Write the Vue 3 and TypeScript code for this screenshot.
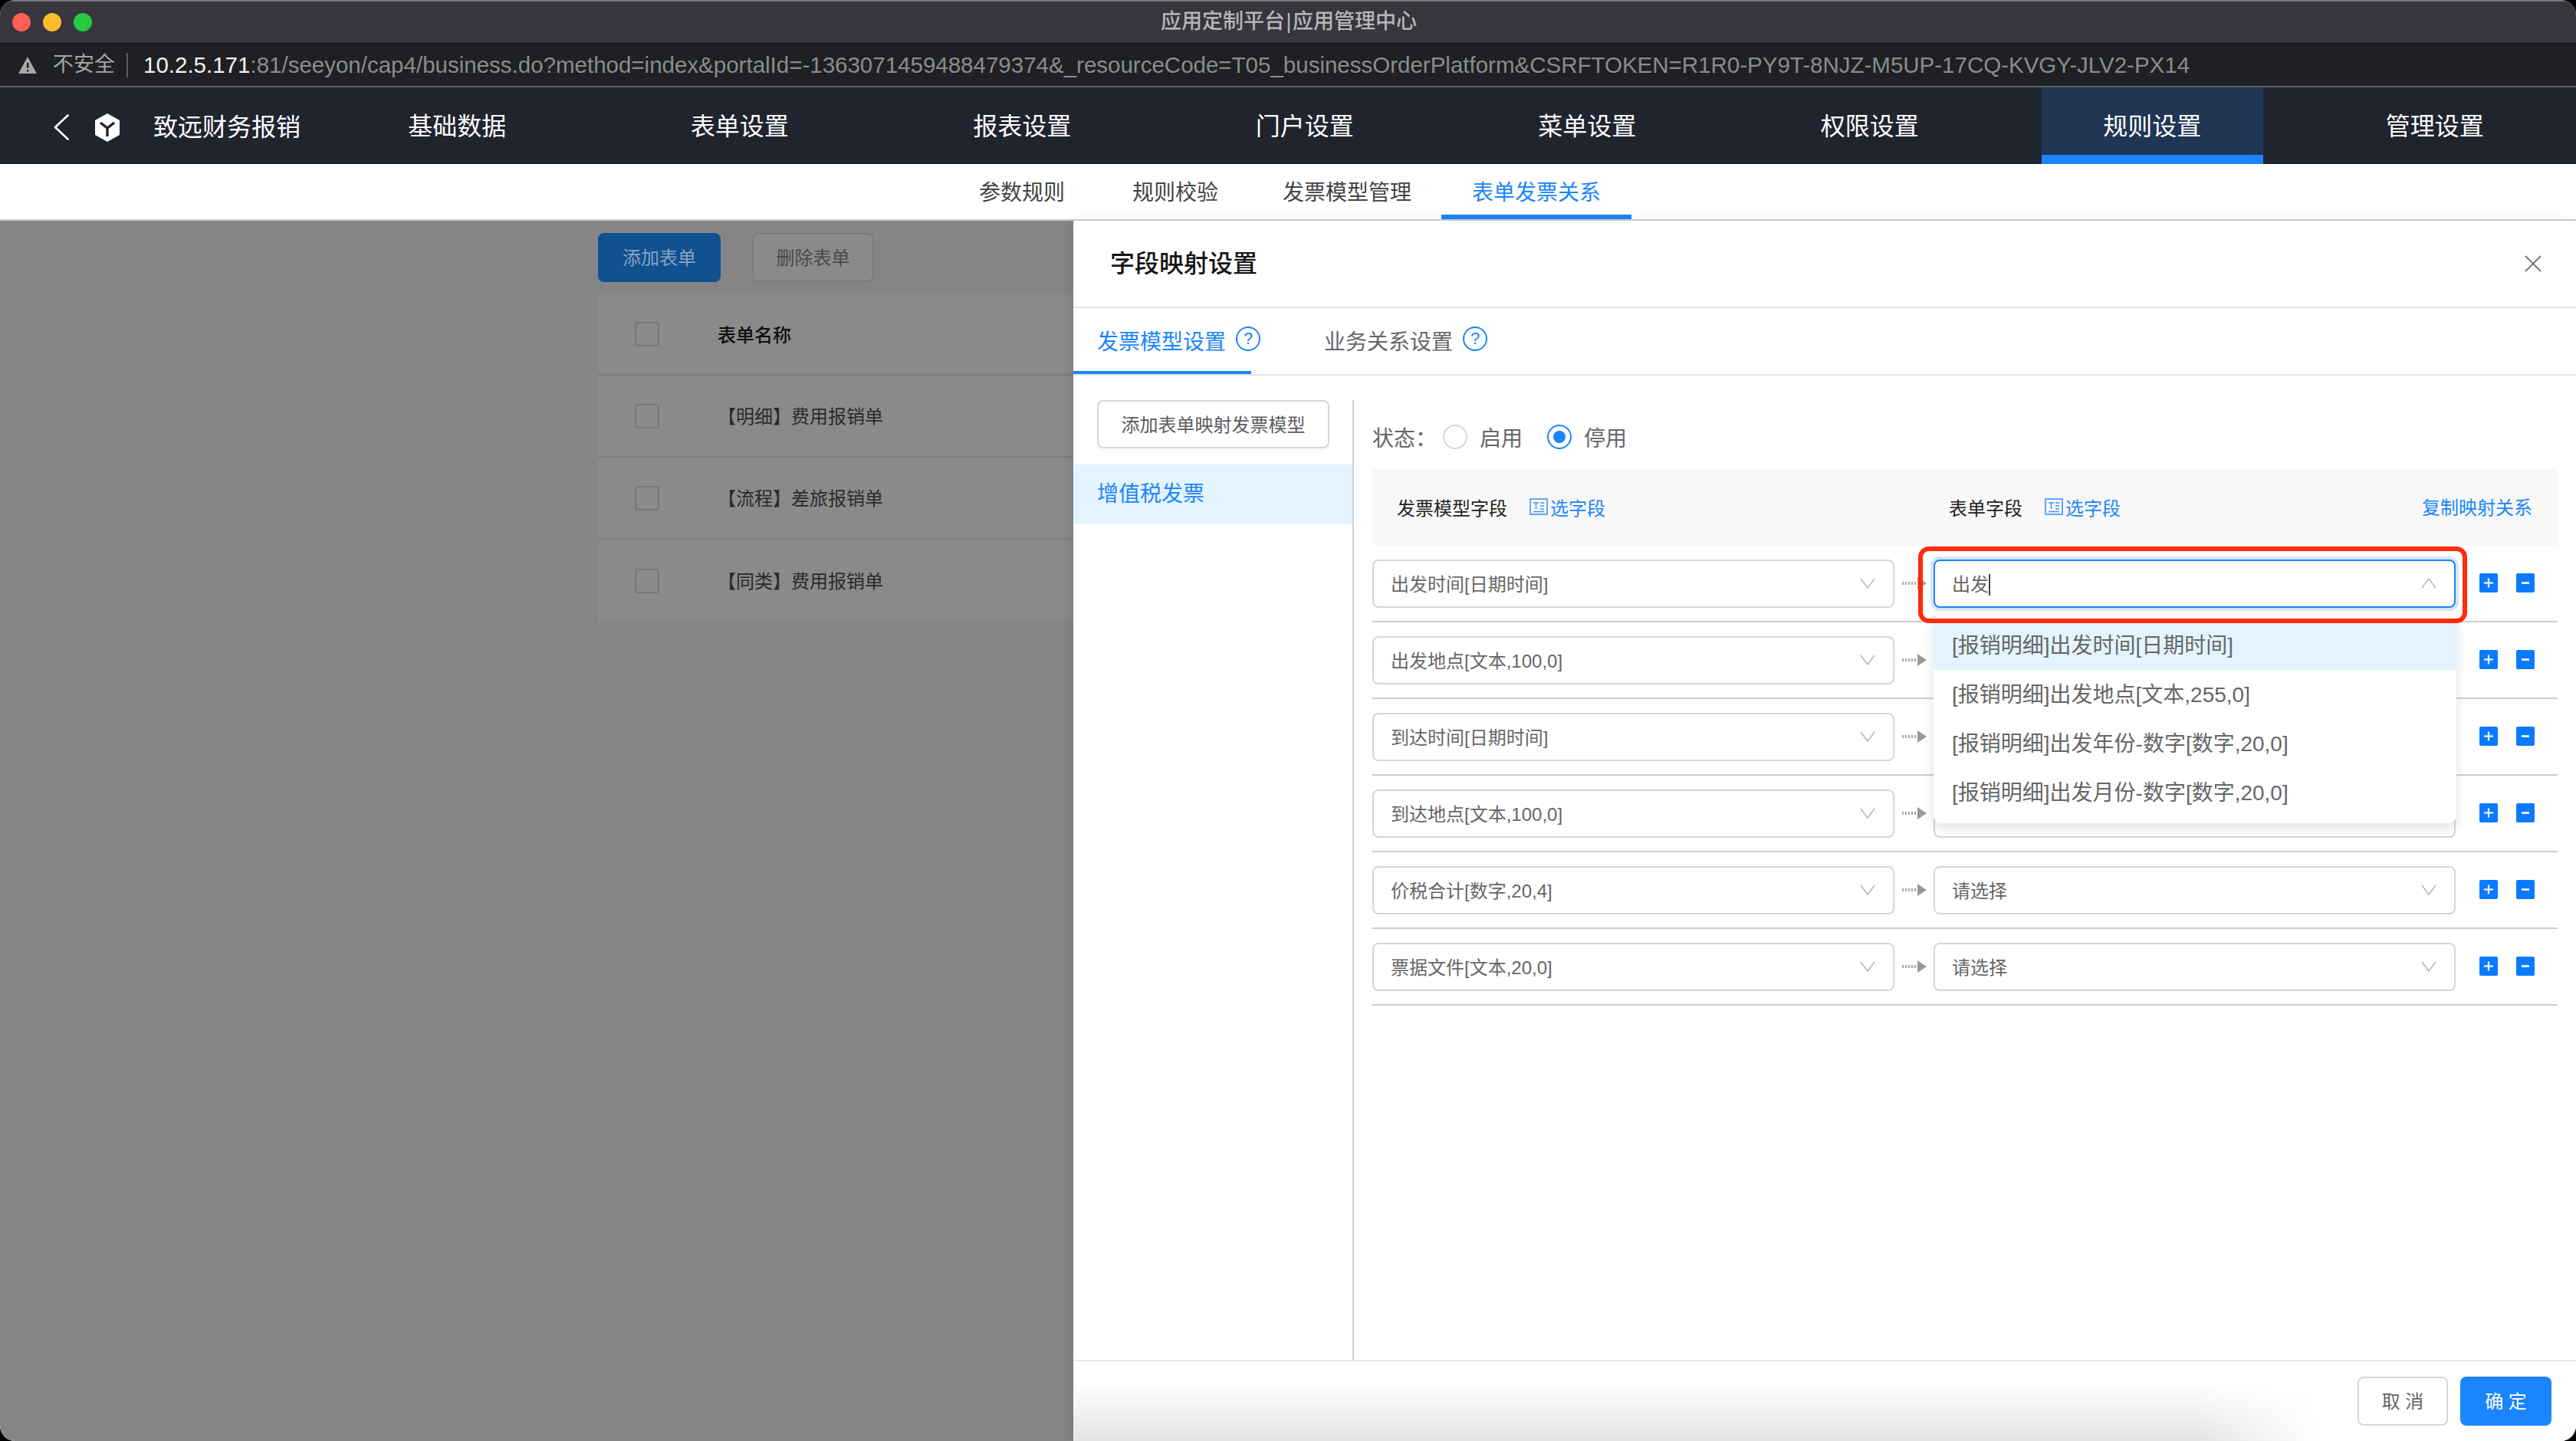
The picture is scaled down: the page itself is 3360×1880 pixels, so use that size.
<script setup lang="ts">
const navItems: string[] = ['基础数据', '表单设置', '报表设置', '门户设置', '菜单设置', '权限设置', '规则设置', '管理设置']
const subTabs: string[] = ['参数规则', '规则校验', '发票模型管理', '表单发票关系']
const tableRows: string[] = ['【明细】费用报销单', '【流程】差旅报销单', '【同类】费用报销单']
const modelFields: string[] = [
  '出发时间[日期时间]',
  '出发地点[文本,100,0]',
  '到达时间[日期时间]',
  '到达地点[文本,100,0]',
  '价税合计[数字,20,4]',
  '票据文件[文本,20,0]',
]
const options: string[] = [
  '[报销明细]出发时间[日期时间]',
  '[报销明细]出发地点[文本,255,0]',
  '[报销明细]出发年份-数字[数字,20,0]',
  '[报销明细]出发月份-数字[数字,20,0]',
]
const url = '10.2.5.171'
const urlRest = ':81/seeyon/cap4/business.do?method=index&portalId=-1363071459488479374&_resourceCode=T05_businessOrderPlatform&CSRFTOKEN=R1R0-PY9T-8NJZ-M5UP-17CQ-KVGY-JLV2-PX14'
</script>

<template>
  <div class="window">
    <header class="titlebar">
      <div class="lights">
        <i class="light red"></i>
        <i class="light yellow"></i>
        <i class="light green"></i>
      </div>
      <div class="win-title">应用定制平台 | 应用管理中心</div>
    </header>

    <div class="addressbar">
      <svg class="warn" width="24" height="22" viewBox="0 0 24 22">
        <path d="M12 0 L24 22 H0 Z" fill="#a8a8a8" />
        <rect x="11" y="8" width="2.4" height="7" fill="#1f2023" />
        <rect x="11" y="17" width="2.4" height="2.4" fill="#1f2023" />
      </svg>
      <span class="insecure">不安全</span>
      <span class="addr-sep"></span>
      <span class="url"><b class="host">{{ url }}</b>{{ urlRest }}</span>
    </div>

    <nav class="topnav">
      <div class="brand">
        <svg width="20" height="34" viewBox="0 0 20 34">
          <path d="M18.5 1.5 L2 17 L18.5 32.5" fill="none" stroke="#fff" stroke-width="2.6" stroke-linecap="round" stroke-linejoin="round" />
        </svg>
        <svg class="logo" width="32" height="37" viewBox="0 0 32 37">
          <path d="M16 0 L32 9 V28 L16 37 L0 28 V9 Z" fill="#fff" />
          <path d="M7 12 L16 19 L25 12 M16 19 V30" fill="none" stroke="#20242f" stroke-width="3.4" />
        </svg>
        <span class="brand-name">致远财务报销</span>
      </div>
      <div v-for="item in navItems" :key="item" class="nav-item">
        <span class="nav-inner" :class="{ active: item === '规则设置' }">{{ item }}</span>
      </div>
    </nav>

    <div class="subnav">
      <span v-for="tab in subTabs" :key="tab" class="subtab" :class="{ on: tab === '表单发票关系' }">{{ tab }}</span>
    </div>

    <main class="stage">
      <section class="backdrop">
        <div class="back-actions">
          <span class="back-btn primary">添加表单</span>
          <span class="back-btn">删除表单</span>
        </div>
        <div class="back-table">
          <div class="back-row head">
            <i class="check"></i>
            <span>表单名称</span>
          </div>
          <div v-for="row in tableRows" :key="row" class="back-row">
            <i class="check"></i>
            <span>{{ row }}</span>
          </div>
        </div>
      </section>

      <section class="panel">
        <div class="panel-head">
          <h2 class="panel-title">字段映射设置</h2>
          <svg width="22" height="22" viewBox="0 0 22 22">
            <path d="M1 1 L21 21 M21 1 L1 21" stroke="#6f6f6f" stroke-width="1.8" fill="none" />
          </svg>
        </div>

        <div class="panel-tabs">
          <div class="ptab on">
            <span>发票模型设置</span>
            <span class="help">?</span>
          </div>
          <div class="ptab">
            <span>业务关系设置</span>
            <span class="help">?</span>
          </div>
        </div>

        <div class="panel-body">
          <aside class="side">
            <div class="side-btn">添加表单映射发票模型</div>
            <div class="side-item">增值税发票</div>
          </aside>

          <div class="mapping">
            <div class="status">
              <span class="status-label">状态：</span>
              <i class="radio"></i>
              <span class="radio-text">启用</span>
              <i class="radio checked"></i>
              <span class="radio-text">停用</span>
            </div>

            <div class="map-head">
              <div class="map-col">
                <span class="col-name">发票模型字段</span>
                <span class="pick">
                  <svg width="24" height="22" viewBox="0 0 24 22">
                    <rect x="1" y="1" width="22" height="20" fill="none" stroke="#3d94f6" stroke-width="1.6" />
                    <path d="M5 6 H12 M8.5 6 V14 M14 6 H19 M14 10 H19 M14 14 H19 M5 17.5 H19" stroke="#3d94f6" stroke-width="1.5" fill="none" />
                  </svg>
                  <span>选字段</span>
                </span>
              </div>
              <div class="map-col right">
                <span class="col-name">表单字段</span>
                <span class="pick">
                  <svg width="24" height="22" viewBox="0 0 24 22">
                    <rect x="1" y="1" width="22" height="20" fill="none" stroke="#3d94f6" stroke-width="1.6" />
                    <path d="M5 6 H12 M8.5 6 V14 M14 6 H19 M14 10 H19 M14 14 H19 M5 17.5 H19" stroke="#3d94f6" stroke-width="1.5" fill="none" />
                  </svg>
                  <span>选字段</span>
                </span>
                <span class="copy">复制映射关系</span>
              </div>
            </div>

            <div v-for="(field, idx) in modelFields" :key="field" class="map-row">
              <div class="select">
                <span>{{ field }}</span>
                <svg width="20" height="14" viewBox="0 0 20 14">
                  <path d="M1 1 L10 13 L19 1" fill="none" stroke="#b4b4b4" stroke-width="1.5" />
                </svg>
              </div>
              <svg class="arrow" width="32" height="16" viewBox="0 0 32 16">
                <path d="M0 8 H21" stroke="#a6a6a6" stroke-width="4" stroke-dasharray="2 2" fill="none" />
                <path d="M20 0 L32 8 L20 16 Z" fill="#999" />
              </svg>
              <div v-if="idx === 0" class="select focus">
                <span>出发<i class="caret"></i></span>
                <svg width="20" height="14" viewBox="0 0 20 14">
                  <path d="M1 13 L10 1 L19 13" fill="none" stroke="#b4b4b4" stroke-width="1.5" />
                </svg>
                <i class="mark"></i>
                <ul class="dropdown">
                  <li v-for="(opt, i) in options" :key="opt" :class="{ hover: i === 0 }">{{ opt }}</li>
                </ul>
              </div>
              <div v-else class="select">
                <span v-if="idx > 3">请选择</span>
                <span v-else></span>
                <svg width="20" height="14" viewBox="0 0 20 14">
                  <path d="M1 1 L10 13 L19 1" fill="none" stroke="#b4b4b4" stroke-width="1.5" />
                </svg>
              </div>
              <svg class="square first" width="24" height="25" viewBox="0 0 24 25">
                <rect width="24" height="25" rx="2" fill="#0a7aff" />
                <path d="M12 6.5 V18.5 M6 12.5 H18" stroke="#fff" stroke-width="2.2" />
              </svg>
              <svg class="square" width="24" height="25" viewBox="0 0 24 25">
                <rect width="24" height="25" rx="2" fill="#0a7aff" />
                <path d="M7 12.5 H17" stroke="#fff" stroke-width="2.6" />
              </svg>
            </div>
          </div>
        </div>

        <footer class="panel-foot">
          <span class="foot-btn">取 消</span>
          <span class="foot-btn ok">确 定</span>
        </footer>
      </section>
    </main>
  </div>
</template>

<style>
html,
body {
  margin: 0;
  background: #000;
  overflow: hidden;
}
</style>

<style scoped>
* {
  box-sizing: border-box;
}
.window {
  width: 3360px;
  height: 1880px;
  border-radius: 20px;
  overflow: hidden;
  display: flex;
  flex-direction: column;
  background: #fff;
  font-family: "Liberation Sans", "Noto Sans CJK SC", sans-serif;
  color: #666;
}
.titlebar {
  height: 57px;
  flex: none;
  background: #37363f;
  border-top: 2px solid #76767a;
  border-bottom: 1px solid #0c0c0e;
  display: flex;
  align-items: center;
  position: relative;
}
.lights {
  display: flex;
  gap: 16px;
  padding-left: 16px;
}
.light {
  width: 24px;
  height: 24px;
  border-radius: 50%;
  display: block;
}
.light.red { background: #ff5f57; }
.light.yellow { background: #febc2e; }
.light.green { background: #28c840; }
.win-title {
  position: absolute;
  left: 1514px;
  top: 8px;
  font-size: 27px;
  line-height: 36px;
  word-spacing: -6px;
  font-weight: 500;
  color: #b6b6ba;
  white-space: nowrap;
}
.addressbar {
  height: 57px;
  flex: none;
  background: #1f2023;
  border-bottom: 2px solid #5d5e61;
  display: flex;
  align-items: center;
  padding-left: 24px;
}
.insecure {
  margin-left: 21px;
  font-size: 27px;
  color: #a4a4a6;
  line-height: 1;
}
.addr-sep {
  width: 2px;
  height: 32px;
  background: #5d5e61;
  margin-left: 15px;
}
.url {
  margin-left: 20px;
  font-size: 29.5px;
  color: #8b8b8e;
  white-space: nowrap;
}
.host {
  color: #f2f2f2;
  font-weight: 400;
}
.topnav {
  height: 100px;
  flex: none;
  background: #20242f;
  display: flex;
  color: #fff;
}
.brand {
  width: 412px;
  flex: none;
  display: flex;
  align-items: center;
  padding: 4px 0 0 70px;
}
.logo {
  margin-left: 34px;
}
.brand-name {
  margin-left: 44px;
  font-size: 32px;
  line-height: 1;
  white-space: nowrap;
}
.nav-item {
  flex: 1;
  display: flex;
  justify-content: center;
}
.nav-inner {
  width: 289px;
  height: 100px;
  display: flex;
  align-items: center;
  justify-content: center;
  padding-bottom: 4px;
  font-size: 32px;
  position: relative;
}
.nav-inner.active {
  background: #203654;
}
.nav-inner.active::after {
  content: "";
  position: absolute;
  left: 0;
  right: 0;
  bottom: 0;
  height: 12px;
  background: #1a85fc;
}
.subnav {
  height: 74px;
  flex: none;
  background: #fff;
  border-bottom: 2px solid #d0d0d0;
  display: flex;
  padding-left: 1277px;
}
.subtab {
  font-size: 28px;
  line-height: 76px;
  height: 72px;
  color: #444;
  position: relative;
  margin-right: 88px;
}
.subtab:nth-child(2) {
  margin-right: 84px;
}
.subtab:nth-child(3) {
  margin-right: 79px;
}
.subtab.on {
  color: #1a85fc;
}
.subtab.on::after {
  content: "";
  position: absolute;
  left: -40px;
  right: -40px;
  bottom: 0;
  height: 6px;
  background: #1a85fc;
}
.stage {
  flex: 1;
  display: flex;
  min-height: 0;
}
.backdrop {
  width: 1400px;
  flex: none;
  background: #858586;
  padding: 16px 0 0 780px;
}
.back-actions {
  display: flex;
  gap: 41px;
}
.back-btn {
  width: 159px;
  height: 64px;
  border-radius: 8px;
  border: 2px solid #7b7b7b;
  background: #8a8a8a;
  color: #4a4a4a;
  font-size: 24px;
  padding-bottom: 3px;
  display: flex;
  align-items: center;
  justify-content: center;
}
.back-btn.primary {
  width: 160px;
  background: #105190;
  border-color: #105190;
  color: #87a3c0;
}
.back-table {
  margin-top: 16px;
  background: #8a8a8a;
}
.back-row {
  height: 107px;
  display: flex;
  align-items: center;
  padding-left: 48px;
  border-bottom: 2px solid #7e7e7e;
  font-size: 24px;
  color: #2a2a2a;
}
.back-row:last-child {
  border-bottom: 0;
}
.back-row.head {
  height: 106px;
  color: #0e0e0e;
  font-weight: 500;
}
.back-row span {
  margin-top: -2px;
}
.check {
  width: 32px;
  height: 32px;
  border: 2px solid #787878;
  border-radius: 4px;
  margin-right: 76px;
  display: block;
  flex: none;
}
.panel {
  flex: 1;
  min-width: 0;
  background: #fff;
  display: flex;
  flex-direction: column;
  box-shadow: -6px 0 14px rgba(0, 0, 0, 0.08);
  position: relative;
}
.panel-head {
  height: 114px;
  flex: none;
  border-bottom: 2px solid #e4e4e4;
  display: flex;
  align-items: center;
  justify-content: space-between;
  padding: 0 45px 0 48px;
}
.panel-title {
  margin: 0;
  font-size: 32px;
  font-weight: 500;
  color: #151515;
  line-height: 1;
}
.panel-tabs {
  height: 88px;
  flex: none;
  border-bottom: 2px solid #e4e4e4;
  display: flex;
}
.ptab {
  height: 84px;
  display: flex;
  align-items: center;
  padding: 0 0 0 31px;
  width: 232px;
  font-size: 28px;
  color: #666;
  position: relative;
  margin-right: 64px;
  white-space: nowrap;
}
.ptab.on {
  color: #1a85fc;
}
.ptab.on::after {
  content: "";
  position: absolute;
  left: 0;
  right: 0;
  bottom: -2px;
  height: 4px;
  background: #1a85fc;
}
.help {
  width: 32px;
  height: 32px;
  border-radius: 50%;
  border: 2px solid #1a85fc;
  color: #1a85fc;
  font-size: 22px;
  line-height: 28px;
  text-align: center;
  margin: -4px 0 0 13px;
  flex: none;
}
.panel-body {
  flex: 1;
  min-height: 0;
  display: flex;
  padding-top: 32px;
}
.side {
  width: 366px;
  flex: none;
  border-right: 2px solid #cfcfcf;
}
.side-btn {
  width: 303px;
  height: 63px;
  margin-left: 31px;
  border: 2px solid #d6d6d6;
  border-radius: 8px;
  display: flex;
  align-items: center;
  justify-content: center;
  padding-bottom: 3px;
  font-size: 24px;
  color: #5c5c5c;
  white-space: nowrap;
  box-shadow: 0 3px 5px rgba(0, 0, 0, 0.03);
}
.side-item {
  height: 78px;
  margin-top: 21px;
  background: #e3f4ff;
  color: #1a85fc;
  font-size: 28px;
  line-height: 78px;
  padding-left: 31px;
}
.mapping {
  width: 1546px;
  margin-left: 24px;
  flex: none;
}
.status {
  height: 90px;
  padding: 6px 0 0;
  display: flex;
  align-items: center;
  font-size: 28px;
  color: #666;
}
.status-label {
  width: 92px;
  flex: none;
}
.radio {
  width: 32px;
  height: 32px;
  border-radius: 50%;
  border: 2px solid #d6d6d6;
  flex: none;
  display: block;
  position: relative;
}
.radio.checked {
  border-color: #1a85fc;
}
.radio.checked::after {
  content: "";
  position: absolute;
  left: 6px;
  top: 6px;
  width: 16px;
  height: 16px;
  border-radius: 50%;
  background: #1a85fc;
}
.radio-text {
  margin-left: 16px;
  width: 88px;
  flex: none;
}
.radio-text:last-child {
  width: auto;
}
.map-head {
  height: 100px;
  padding-bottom: 2px;
  background: #f8f8f8;
  display: flex;
  align-items: center;
}
.map-col {
  display: flex;
  align-items: center;
  width: 720px;
  padding-left: 32px;
  flex: none;
  font-size: 24px;
}
.map-col.right {
  flex: 1;
  width: auto;
  padding-right: 33px;
}
.col-name {
  color: #222;
  margin-right: 29px;
}
.pick {
  color: #1a85fc;
  display: flex;
  align-items: center;
  gap: 3px;
}
.copy {
  margin-left: auto;
  color: #1a85fc;
  margin-top: -2px;
}
.map-row {
  height: 100px;
  padding-top: 18px;
  border-bottom: 2px solid #cdcdcd;
  display: flex;
  align-items: flex-start;
}
.select {
  width: 681px;
  height: 63px;
  flex: none;
  border: 2px solid #d6d6d6;
  border-radius: 8px;
  display: flex;
  align-items: center;
  justify-content: space-between;
  padding: 0 23px 2px 22px;
  font-size: 24px;
  color: #666;
  background: #fff;
  position: relative;
}
.select.focus {
  border-color: #1a85fc;
  box-shadow: 0 0 0 4px #d5e6fb;
}
.caret {
  display: inline-block;
  width: 2px;
  height: 28px;
  background: #444;
  vertical-align: -6px;
}
.arrow {
  margin: 23px 9px 0 10px;
  flex: none;
}
.square {
  margin-top: 18px;
  margin-left: 24px;
  flex: none;
}
.square.first {
  margin-left: 31px;
}
.mark {
  position: absolute;
  left: -22px;
  top: -19px;
  width: 716px;
  height: 100px;
  border: 6px solid #ff2a0a;
  border-radius: 14px;
  z-index: 3;
}
.dropdown {
  position: absolute;
  left: -2px;
  top: 70px;
  width: 682px;
  margin: 0;
  padding: 8px 0;
  list-style: none;
  background: #fff;
  border-radius: 10px;
  box-shadow: 0 6px 16px rgba(0, 0, 0, 0.12);
  z-index: 2;
}
.dropdown li {
  height: 64px;
  line-height: 66px;
  padding-left: 24px;
  font-size: 28px;
  color: #666;
  white-space: nowrap;
}
.dropdown li.hover {
  background: #e3f4ff;
}
.panel-foot {
  height: 106px;
  flex: none;
  border-top: 2px solid #e8e8e8;
  display: flex;
  justify-content: flex-end;
  gap: 16px;
  padding: 20px 32px 0 0;
  position: relative;
  overflow: hidden;
}
.panel-foot::before {
  content: "";
  position: absolute;
  left: 0;
  bottom: 0;
  width: 1630px;
  height: 76px;
  background: linear-gradient(to top, #e4e4e4, #ffffff);
  -webkit-mask-image: linear-gradient(to right, #000 90%, transparent);
  mask-image: linear-gradient(to right, #000 90%, transparent);
}
.foot-btn {
  width: 118px;
  height: 64px;
  border: 2px solid #d6d6d6;
  border-radius: 8px;
  background: #fff;
  color: #666;
  font-size: 24px;
  padding-bottom: 4px;
  display: flex;
  align-items: center;
  justify-content: center;
  position: relative;
}
.foot-btn.ok {
  width: 119px;
  background: #1a85fc;
  border-color: #1a85fc;
  color: #fff;
}
</style>
